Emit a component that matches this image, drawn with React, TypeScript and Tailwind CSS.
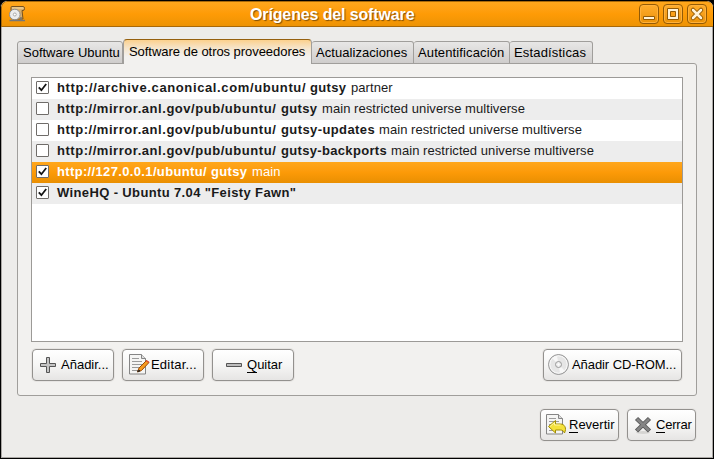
import type { ReactNode } from "react";

type Source = { checked: boolean; uri: string; suite: string; comps: string; uriClass: string; suiteClass: string; selected?: boolean };

const MIRROR = "http://mirror.anl.gov/pub/ubuntu/";
const EXTRA = "main restricted universe multiverse";

const sources: Source[] = [
  { checked: true, uri: "http://archive.canonical.com/ubuntu/", suite: "gutsy", comps: "partner", uriClass: "w-[253px] tracking-[0.62px]", suiteClass: "w-[41px] tracking-[0.35px]" },
  { checked: false, uri: MIRROR, suite: "gutsy", comps: EXTRA, uriClass: "w-[224px] tracking-[0.54px]", suiteClass: "w-[41px] tracking-[0.35px]" },
  { checked: false, uri: MIRROR, suite: "gutsy-updates", comps: EXTRA, uriClass: "w-[224px] tracking-[0.54px]", suiteClass: "w-[98px] tracking-[0.4px]" },
  { checked: false, uri: MIRROR, suite: "gutsy-backports", comps: EXTRA, uriClass: "w-[224px] tracking-[0.54px]", suiteClass: "w-[110px] tracking-[0.33px]" },
  { checked: true, uri: "http://127.0.0.1/ubuntu/", suite: "gutsy", comps: "main", uriClass: "w-[154px] tracking-[0.35px]", suiteClass: "w-[41px] tracking-[0.35px]", selected: true },
  { checked: true, uri: 'WineHQ - Ubuntu 7.04 "Feisty Fawn"', suite: "", comps: "", uriClass: "w-[300px] tracking-[0.37px]", suiteClass: "" },
];

function Check({ on }: { on: boolean }) {
  return (
    <span className="ml-1 flex size-[13px] shrink-0 items-center justify-center rounded-[1px] border border-[#6f6c69] bg-white">
      {on && (
        <svg width="11" height="11" viewBox="0 0 11 11">
          <path d="M1.8 5.300 4.400 8.200 9.200 2" fill="none" stroke="#141414" strokeWidth="1.800" />
        </svg>
      )}
    </span>
  );
}

function Row({ s, i }: { s: Source; i: number }) {
  const bg = s.selected ? "bg-linear-to-b from-[#ffa71c] via-[#fc9a08] to-[#e98f02] text-white" : i % 2 ? "bg-[#ededed]" : "bg-white";
  return (
    <div className={`flex h-[21px] items-center whitespace-pre pb-0.5 ${bg}`}>
      <Check on={s.checked} />
      <b className={`ml-2 shrink-0 leading-[19px] ${s.uriClass}`}>{s.uri}</b>
      <b className={`shrink-0 leading-[19px] ${s.suiteClass}`}>{s.suite}</b>
      <span className="leading-[19px] tracking-[0.06px]">{s.comps}</span>
    </div>
  );
}

function Tab({ w, pad, children }: { w: string; pad: string; children: ReactNode }) {
  return (
    <div className={`h-[23px] shrink-0 rounded-t-[3px] border border-l-0 border-[#a09e9b] bg-linear-to-b from-[#e8e7e6] to-[#cfcdcc] pt-px leading-[20px] first:border-l ${w} ${pad}`}>{children}</div>
  );
}

function Button({ w, pad, gap, icon, children }: { w: string; pad: string; gap: string; icon: ReactNode; children: ReactNode }) {
  return (
    <button className={`flex h-8 shrink-0 items-center whitespace-nowrap rounded-[4px] border border-[#93918e] bg-linear-to-b from-white from-0% via-[#f6f6f5] via-50% to-[#e6e5e4] shadow-[0_0_0_1px_#e7e5e3] ${w} ${pad} ${gap}`}>
      {icon}
      <span className="leading-4">{children}</span>
    </button>
  );
}

function Key({ children }: { children: string }) {
  return <span className="inline-block h-4 border-b border-black">{children}</span>;
}

function WindowButton({ children }: { children: ReactNode }) {
  return (
    <button className="flex size-5 items-center justify-center rounded-[4px] border border-[#935a05] bg-linear-to-b from-[#ffad2c] to-[#eb9204] shadow-[inset_0_0_0_1px_#ffb13c]">
      <svg width="18" height="18" viewBox="0 0 18 18">{children}</svg>
    </button>
  );
}

function PaperLines() {
  return (
    <>
      <path d="M1.500.500h12l4 4v15.500h-16z" fill="#f5f5f4" stroke="#858585" />
      <path d="M13.500.500v4h4" fill="#ddd" stroke="#858585" />
      <path d="M4 4.500h7M4 7.500h10M4 10.500h10M4 13.500h8M4 16.500h6" stroke="#9b9b9b" />
    </>
  );
}

export default function App() {
  return (
    <div className="h-[459px] w-[714px] overflow-hidden bg-black font-['Liberation_Sans',Arial,sans-serif] text-[13px] text-black">
      <div className="flex h-[458px] w-[714px] flex-col overflow-hidden rounded-t-[7px] border-x border-t border-black bg-[#edecea]">
        <header className="flex h-[26px] shrink-0 items-center rounded-t-[6px] border-b border-l border-t border-[#a8690a] bg-linear-to-b from-[#ffa71c] via-[#fe9b06] to-[#ed9305] pl-[6px] pr-[6px]">
          <svg width="18" height="18" viewBox="0 0 18 18" className="shrink-0">
            <path d="M3 2.500q0-1 1-1h11q1.500 0 1.500 2T15 5.500h-1l1 8.500H5V5.500H3z" fill="#d7ad6b" stroke="#76511d" />
            <path d="M4 3h11.500" stroke="#f8dea9" />
            <circle cx="6.800" cy="9.500" r="5.300" fill="#ececec" stroke="#8e8e8e" />
            <circle cx="6.800" cy="9.500" r="1.500" fill="#fff" stroke="#aaa" />
            <path d="M1.500 15.500h15.500M13 12v4" stroke="#777" strokeWidth="1.500" />
          </svg>
          <h1 className="ml-[224px] flex-1 whitespace-nowrap pt-px text-[16px] font-bold leading-5 tracking-[-0.13px] text-white [text-shadow:1px_1px_1px_#80500a]">Orígenes del software</h1>
          <div className="flex gap-1">
            <WindowButton><path d="M3.500 11.500h11v3h-11z" fill="#fff3d8" stroke="#935a05" /></WindowButton>
            <WindowButton>
              <path d="M3.500 3.500h11v11h-11z" fill="#fff3d8" stroke="#935a05" />
              <path d="M6.500 6.500h5v5h-5z" fill="#fb9f16" stroke="#935a05" />
            </WindowButton>
            <WindowButton><path d="m5 5 8 8m0-8-8 8" stroke="#935a05" strokeWidth="4.500" strokeLinecap="round" /><path d="m5 5 8 8m0-8-8 8" stroke="#fff3d8" strokeWidth="2.500" strokeLinecap="round" /></WindowButton>
          </div>
        </header>

        <main className="flex flex-1 flex-col border-x border-b border-[#aaa7a4] pl-[15px] pr-[16px] pt-3">
          <div className="z-10 flex h-[25px] shrink-0 items-end whitespace-nowrap">
            <Tab w="w-[106px]" pad="pl-[5px]">Software Ubuntu</Tab>
            <div className="h-[25px] w-[189px] shrink-0 rounded-t-[4px] border border-b-0 border-t-[#95600f] border-x-[#a09e9b] bg-linear-to-b from-[#fbd08c] via-[#f5e5cc] via-35% to-[#f2f1ef] to-70% pl-[5px] leading-[23px] tracking-[-0.05px]">Software de otros proveedores</div>
            <Tab w="w-[102px]" pad="pl-[4px] tracking-[0.06px]">Actualizaciones</Tab>
            <Tab w="w-[96px]" pad="pl-[4px] tracking-[0.12px]">Autentificación</Tab>
            <Tab w="w-[83px]" pad="pl-[4px] tracking-[0.17px]">Estadísticas</Tab>
          </div>
          <section className="-mt-px flex h-[333px] w-[680px] shrink-0 flex-col rounded-b-[3px] rounded-tr-[3px] border border-[#a09e9b] bg-[#f2f1ef] px-[13px] pt-[13px]">
            <div className="h-[265px] w-[652px] border border-[#9c9a97] bg-white text-[#1a1a1a]">
              {sources.map((s, i) => <Row key={i} s={s} i={i} />)}
            </div>
            <div className="mt-[7px] flex gap-2 px-px">
              <Button w="w-[82px]" pad="pl-[7px]" gap="gap-[4px]" icon={
                <svg width="17" height="17" viewBox="0 0 17 17"><path d="M6.500.500h3v6h6v3h-6v6h-3v-6h-6v-3h6z" fill="#c4c4c4" stroke="#555" /></svg>
              }>Añadir...</Button>
              <Button w="w-[82px]" pad="pl-[5px] tracking-[0.2px]" gap="gap-[1px]" icon={
                <svg width="22" height="22" viewBox="0 0 22 22" className="shrink-0"><PaperLines /><path d="m11 14 7.500-7.500 2.500 2-7.500 8-4 1.500z" fill="#f69a1e" stroke="#994b08" /><path d="m9.500 17.500 2.500-1" stroke="#222" strokeWidth="1.500" /><path d="m18 6.500 3 2" stroke="#e04c2d" strokeWidth="1.500" /></svg>
              }>Editar...</Button>
              <Button w="w-[82px]" pad="pl-[13px]" gap="gap-[5px]" icon={
                <svg width="16" height="4" viewBox="0 0 16 4"><path d="M.5.500h15v3H.5z" fill="#bdbdbd" stroke="#555" /></svg>
              }><Key>Q</Key>uitar</Button>
              <div className="flex-1" />
              <Button w="w-[139px]" pad="pl-[4px] tracking-[-0.08px]" gap="gap-[2px]" icon={
                <svg width="22" height="22" viewBox="0 0 22 22" className="shrink-0"><circle cx="10.500" cy="10.500" r="9.900" fill="#e6e6e6" stroke="#8c8c8c" /><circle cx="10.500" cy="10.500" r="8.700" fill="none" stroke="#fafafa" /><path d="M10.500 10.500 4 4l5-2zM10.500 10.500 17 17l-5 2z" fill="#f8f8f8" /><circle cx="10.500" cy="10.500" r="3" fill="#eee" stroke="#999" /><circle cx="10.500" cy="10.500" r="1" fill="#fff" /></svg>
              }>Añadir CD-ROM...</Button>
            </div>
          </section>
          <footer className="mt-[13px] flex justify-end gap-2">
            <Button w="w-[79px]" pad="pl-[4px]" gap="gap-[2px]" icon={
              <svg width="22" height="22" viewBox="0 0 22 22" className="shrink-0"><PaperLines /><path d="m3.500 12.500 7-6v3.500h5c4 0 6.500 4 4 9-1-2-2-3-4-3h-5v3z" fill="#f4e13c" stroke="#a28d04" /><path d="m5 12.500 4.500-4v2.500h6" fill="none" stroke="#fff6a0" /></svg>
            }><Key>R</Key>evertir</Button>
            <Button w="w-[69px]" pad="pl-[6px] tracking-[-0.2px]" gap="gap-[4px]" icon={
              <svg width="18" height="18" viewBox="0 0 18 18" className="shrink-0"><ellipse cx="9" cy="16.500" rx="7" ry="1.500" fill="#d5d4d2" /><path d="m2.500 2.500 13 12.500m0-12.500L2.500 15" stroke="#585858" strokeWidth="4.500" /><path d="m3 3 12 11.500M15 3 3 14.500" stroke="#858585" strokeWidth="2.700" /></svg>
            }><Key>C</Key>errar</Button>
          </footer>
        </main>
      </div>
    </div>
  );
}
